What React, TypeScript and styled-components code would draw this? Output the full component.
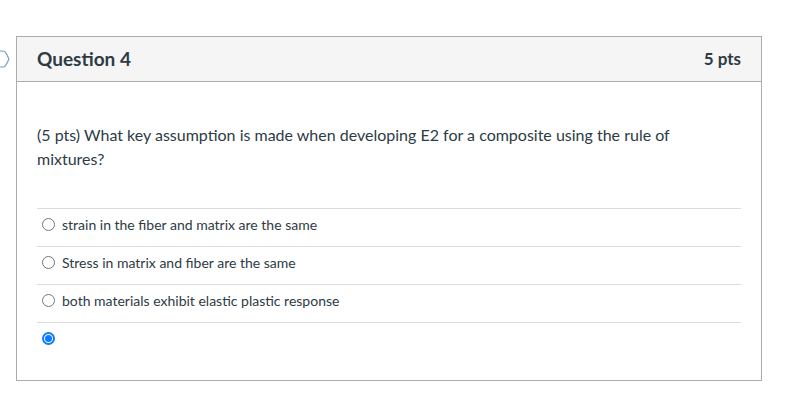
import React from "react";
import styled, { createGlobalStyle } from "styled-components";

const GlobalStyle = createGlobalStyle`
  body {
    margin: 0;
    background: #ffffff;
    font-family: Lato, "Open Sans", "Liberation Sans", sans-serif;
    color: #2d3b45;
  }
`;

const Page = styled.div`
  display: flex;
  align-items: flex-start;
  padding-top: 36px;
`;

const Marker = styled.div`
  width: 16px;
  height: 45px;
  display: flex;
  align-items: center;
`;

const Card = styled.section`
  width: 744px;
  border: 1px solid #a8adb1;
  background: #fff;
`;

const Header = styled.header`
  display: flex;
  justify-content: space-between;
  align-items: center;
  height: 42px;
  padding: 0 20px 2px;
  background: #f5f5f5;
  border-bottom: 1px solid #a8adb1;
`;

const Title = styled.h2`
  margin: 0;
  font-size: 19px;
  font-weight: 700;
  color: #2d3b45;
`;

const Points = styled.span`
  font-size: 17px;
  font-weight: 700;
  color: #2d3b45;
`;

const Body = styled.div`
  padding: 41px 20px 20px;
`;

const Prompt = styled.p`
  margin: 0 0 37px;
  font-size: 16px;
  line-height: 24px;
  width: 650px;
`;

const Answers = styled.div`
  display: flex;
  flex-direction: column;
`;

const Answer = styled.label`
  display: flex;
  align-items: center;
  gap: 7px;
  height: 31px;
  padding: 0 0 6px 5px;
  border-top: 1px solid #dadcde;
  font-size: 14px;
  color: #2d3b45;
`;

const Radio = styled.span<{ $checked?: boolean }>`
  box-sizing: border-box;
  flex: none;
  width: 13px;
  height: 13px;
  border-radius: 50%;
  border: 1px solid ${(p) => (p.$checked ? "#0b7cff" : "#767676")};
  display: flex;
  align-items: center;
  justify-content: center;
  ${(p) => p.$checked && "border-width: 2px;"}

  &::after {
    content: "";
    display: ${(p) => (p.$checked ? "block" : "none")};
    width: 7px;
    height: 7px;
    border-radius: 50%;
    background: #0b7cff;
  }
`;

const answers = [
  "strain in the fiber and matrix are the same",
  "Stress in matrix and fiber are the same",
  "both materials exhibit elastic plastic response",
  "",
];

export default function App() {
  return (
    <>
      <GlobalStyle />
      <Page>
        <Marker>
          <svg width="10" height="20" viewBox="0 0 10 20">
            <path
              d="M-1 2 H3 Q5 2 6.5 5 L8.5 9 Q9 10 8.5 11 L6.5 15 Q5 18 3 18 H-1"
              fill="none"
              stroke="#7d9dbd"
              strokeWidth="1.2"
            />
          </svg>
        </Marker>
        <Card>
          <Header>
            <Title>Question 4</Title>
            <Points>5 pts</Points>
          </Header>
          <Body>
            <Prompt>
              (5 pts) What key assumption is made when developing E2 for a composite using the rule of
              mixtures?
            </Prompt>
            <Answers>
              {answers.map((a, i) => (
                <Answer key={i}>
                  <Radio $checked={i === 3} />
                  {a}
                </Answer>
              ))}
            </Answers>
          </Body>
        </Card>
      </Page>
    </>
  );
}
